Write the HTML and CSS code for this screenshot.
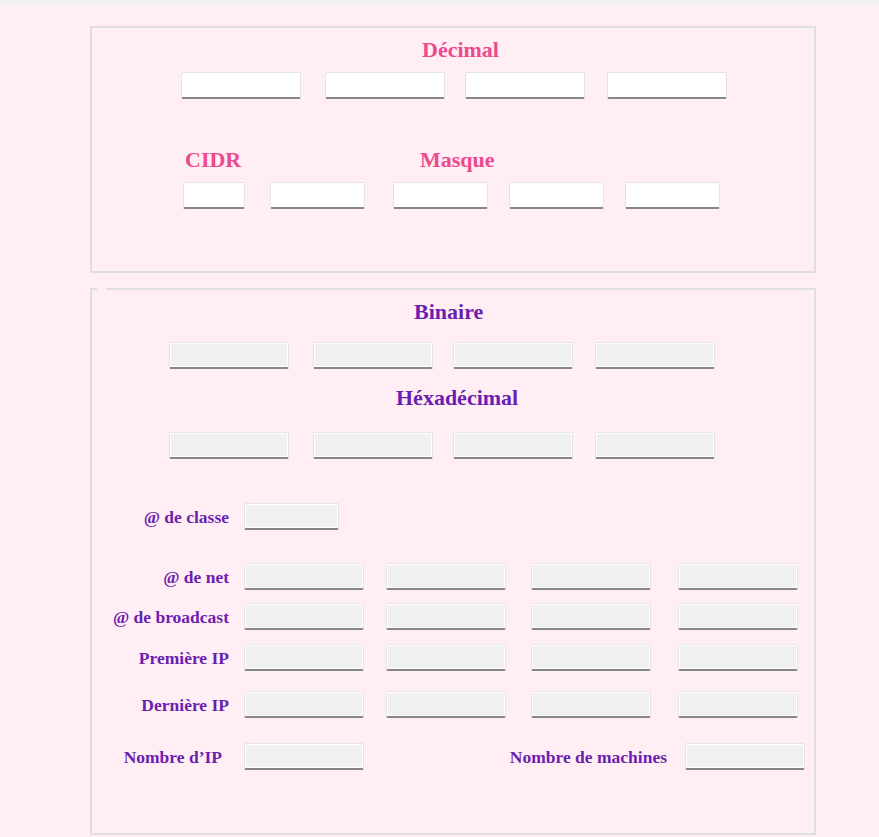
FILE: index.html
```html
<!DOCTYPE html>
<html lang="fr">
<head>
<meta charset="utf-8">
<title>Calculateur IP</title>
<link rel="stylesheet" href="styles.css">
</head>
<body>
<div class="topbar"></div>
<main class="wrap">
  <fieldset class="box box-top">
    <h2 class="title pink t-dec">Décimal</h2>
    <div class="quad">
      <input type="text"><input type="text"><input type="text"><input type="text">
    </div>
    <div class="mask-labels">
      <span class="title pink">CIDR</span>
      <span class="title pink">Masque</span>
    </div>
    <div class="mask-row">
      <input type="text" class="cidr"><input type="text" class="m"><input type="text" class="m"><input type="text" class="m"><input type="text" class="m">
    </div>
  </fieldset>

  <fieldset class="box box-bottom">
    <legend></legend>
    <h2 class="title purple t-bin">Binaire</h2>
    <div class="quad out q-bin">
      <input type="text" readonly><input type="text" readonly><input type="text" readonly><input type="text" readonly>
    </div>
    <h2 class="title purple t-hex">Héxadécimal</h2>
    <div class="quad out q-hex">
      <input type="text" readonly><input type="text" readonly><input type="text" readonly><input type="text" readonly>
    </div>

    <div class="arow r-classe">
      <label class="lbl">@ de classe</label>
      <input type="text" class="out small" readonly>
    </div>
    <div class="arow r-net">
      <label class="lbl">@ de net</label>
      <input type="text" class="out" readonly><input type="text" class="out" readonly><input type="text" class="out" readonly><input type="text" class="out" readonly>
    </div>
    <div class="arow r-bc">
      <label class="lbl">@ de broadcast</label>
      <input type="text" class="out" readonly><input type="text" class="out" readonly><input type="text" class="out" readonly><input type="text" class="out" readonly>
    </div>
    <div class="arow r-first">
      <label class="lbl">Première IP</label>
      <input type="text" class="out" readonly><input type="text" class="out" readonly><input type="text" class="out" readonly><input type="text" class="out" readonly>
    </div>
    <div class="arow r-last">
      <label class="lbl">Dernière IP</label>
      <input type="text" class="out" readonly><input type="text" class="out" readonly><input type="text" class="out" readonly><input type="text" class="out" readonly>
    </div>
    <div class="arow r-count">
      <label class="lbl lbl-nb">Nombre d’IP</label>
      <input type="text" class="out" readonly>
      <span class="spacer"></span>
      <label class="lbl lbl-mach">Nombre de machines</label>
      <input type="text" class="out mach" readonly>
    </div>
  </fieldset>
</main>
</body>
</html>
```

FILE: styles.css
```css
html {
  background: #ffeef4;
}
body {
  margin: 0;
  background: #ffeef4;
  font-family: "Liberation Serif", "Times New Roman", serif;
}
.topbar {
  height: 5px;
  background: #f2f2f2;
}
.wrap {
  margin-left: 90px;
  width: 726px;
  padding-top: 21px;
}
.box {
  box-sizing: border-box;
  width: 726px;
  margin: 0;
  padding: 0;
  min-width: 0;
  border: 2px solid #dfdfdf;
}
.box-top {
  padding-bottom: 62px;
}
.box-bottom {
  margin-top: 15px;
  padding-bottom: 63px;
}
.box-bottom legend {
  margin-left: 5px;
  padding: 0 5px;
  height: 0;
  line-height: 0;
  font-size: 0;
}

.title {
  margin: 0;
  font-size: 22px;
  line-height: 26px;
  font-weight: bold;
}
.pink { color: #ec4a8e; }
.purple { color: #6b1fb0; }

.t-dec { margin-top: 9px; padding-left: 330px; }
.t-bin { margin-top: 9px; padding-left: 322px; }
.t-hex { margin-top: 16px; padding-left: 304px; }

input {
  box-sizing: border-box;
  width: 120px;
  height: 27px;
  margin: 0;
  padding: 0 4px;
  background: #ffffff;
  border: 1px solid #e4e4e4;
  border-bottom: 2px solid #868686;
  border-radius: 2px;
  font-family: "Liberation Sans", Arial, sans-serif;
  font-size: 13px;
  outline: none;
}
input.out,
.quad.out input {
  background: #f0f0f0;
  box-shadow: inset 0 0 0 1px #ffffff;
}

.quad {
  display: flex;
  margin-top: 9px;
  padding-left: 89px;
}
.quad input:nth-child(2) { margin-left: 24px; }
.quad input:nth-child(3) { margin-left: 20px; }
.quad input:nth-child(4) { margin-left: 22px; }
.q-bin { margin-top: 17px; padding-left: 77px; }
.q-hex { margin-top: 21px; padding-left: 77px; }

.mask-labels {
  display: grid;
  grid-template-columns: 235px auto;
  margin-top: 48px;
  padding-left: 93px;
}
.mask-row {
  display: flex;
  margin-top: 9px;
  padding-left: 91px;
}
.mask-row .cidr { width: 62px; }
.mask-row .m { width: 95px; }
.mask-row input:nth-child(2) { margin-left: 25px; }
.mask-row input:nth-child(3) { margin-left: 28px; }
.mask-row input:nth-child(4) { margin-left: 21px; }
.mask-row input:nth-child(5) { margin-left: 21px; }

.arow {
  display: flex;
  align-items: center;
}
.lbl {
  box-sizing: border-box;
  width: 137px;
  margin-right: 15px;
  text-align: right;
  color: #6b1fb0;
  font-weight: bold;
  font-size: 17.5px;
  line-height: 20px;
  white-space: nowrap;
}
.arow input:nth-of-type(2) { margin-left: 22px; }
.arow input:nth-of-type(3) { margin-left: 25px; }
.arow input:nth-of-type(4) { margin-left: 27px; }
.arow .small { width: 95px; }

.r-classe { margin-top: 44px; }
.r-net { margin-top: 33px; }
.r-bc { margin-top: 13px; }
.r-first { margin-top: 14px; }
.r-last { margin-top: 20px; }
.r-count { margin-top: 25px; padding-right: 9px; }
.lbl-nb { padding-right: 7px; }
.spacer { flex: 1; }
.lbl-mach {
  width: auto;
  margin-right: 18px;
}
.arow input.mach { margin-left: 0; }
```
